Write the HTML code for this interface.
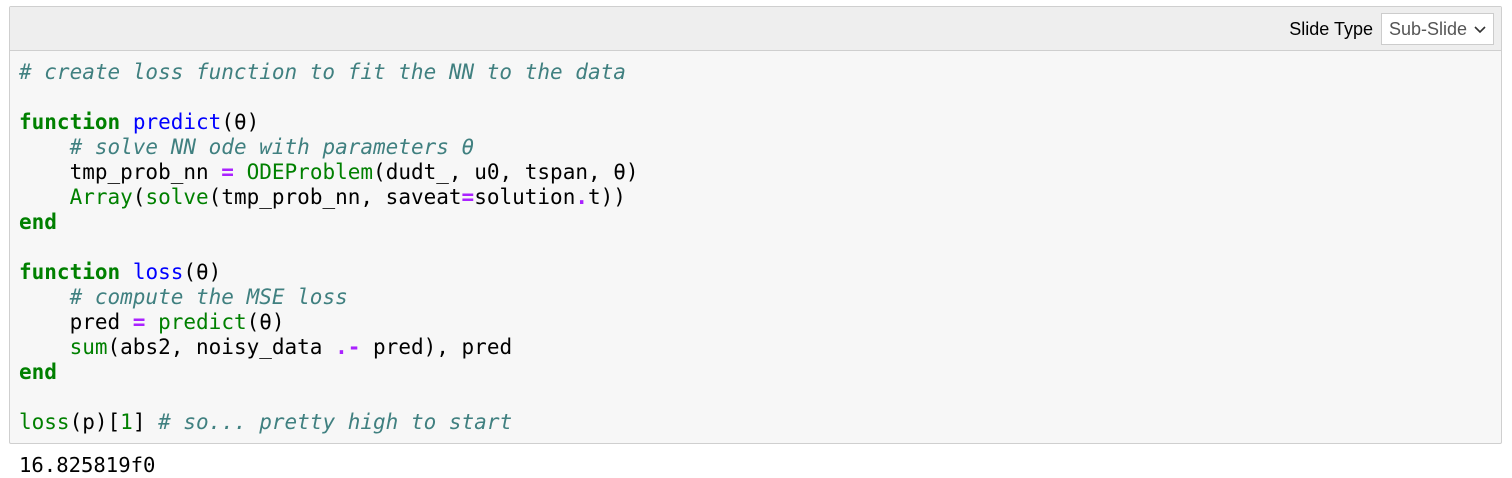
<!DOCTYPE html>
<html><head><meta charset="utf-8"><style>
body{margin:0;width:1512px;height:478px;background:#fff;font-family:"Liberation Sans",sans-serif;overflow:hidden}
.cell{position:absolute;left:9px;top:6px;width:1491px;height:436px;border:1px solid #cfcfcf;border-radius:2px;background:#f7f7f7}
.hdr{height:43px;background:#eeeeee;border-bottom:1px solid #cfcfcf;position:relative}
.lbl{position:absolute;right:128px;top:12px;font-size:18px;color:#000}
.sel{position:absolute;right:7px;top:6px;width:113px;height:32px;background:#fff;border:1px solid #ccc;box-sizing:border-box;font-size:18px;color:#555;padding:5px 0 0 7px}
.sel svg{position:absolute;right:7px;top:12px}
pre{margin:0;position:absolute;left:9px;top:53px;font-family:"DejaVu Sans Mono","Liberation Mono",monospace;font-size:21px;line-height:25px;color:#000}
.c{color:#408080;font-style:italic}.k{color:#008000;font-weight:bold}.f{color:#0000ff}.b{color:#008000}.o{color:#aa22ff;font-weight:bold}
.out{position:absolute;left:19px;top:453px;font-family:"DejaVu Sans Mono","Liberation Mono",monospace;font-size:20.6px;line-height:25px}
</style></head><body>
<div class="cell"><div class="hdr"><span class="lbl">Slide Type</span><div class="sel">Sub-Slide<svg width="12" height="8" viewBox="0 0 12 8"><path d="M1 1l5 5 5-5" stroke="#333" stroke-width="1.6" fill="none"/></svg></div></div>
<pre><span class="c"># create loss function to fit the NN to the data</span>

<span class="k">function</span> <span class="f">predict</span>(θ)
    <span class="c"># solve NN ode with parameters θ</span>
    tmp_prob_nn <span class="o">=</span> <span class="b">ODEProblem</span>(dudt_, u0, tspan, θ)
    <span class="b">Array</span>(<span class="b">solve</span>(tmp_prob_nn, saveat<span class="o">=</span>solution<span class="o">.</span>t))
<span class="k">end</span>

<span class="k">function</span> <span class="f">loss</span>(θ)
    <span class="c"># compute the MSE loss</span>
    pred <span class="o">=</span> <span class="b">predict</span>(θ)
    <span class="b">sum</span>(abs2, noisy_data <span class="o">.-</span> pred), pred
<span class="k">end</span>

<span class="b">loss</span>(p)[<span class="b">1</span>] <span class="c"># so... pretty high to start</span></pre>
</div>
<div class="out">16.825819f0</div>
</body></html>
